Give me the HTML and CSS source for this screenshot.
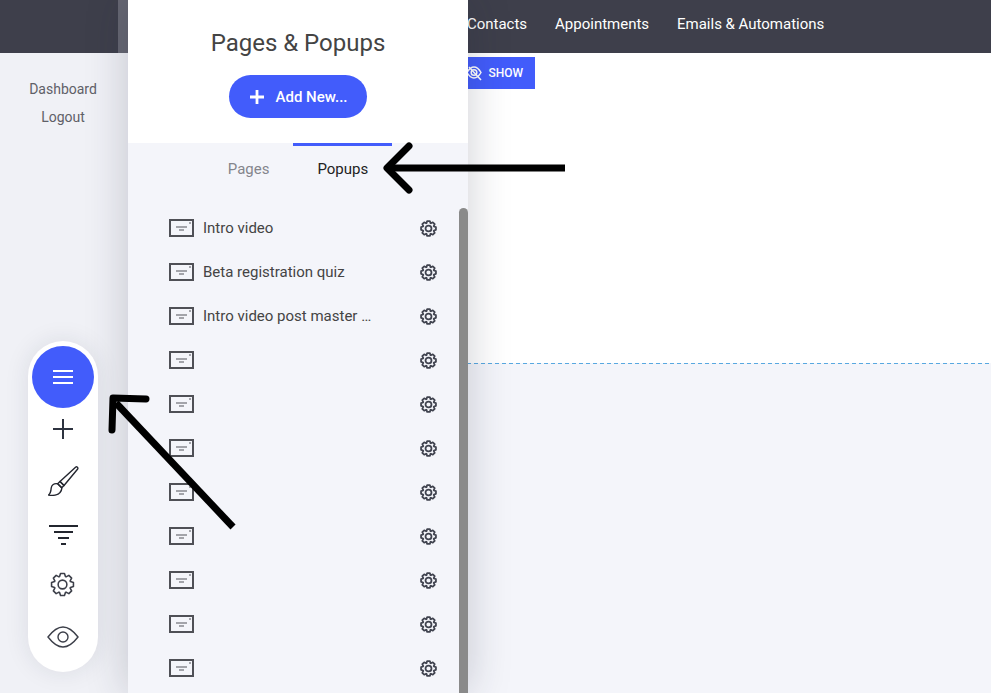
FILE: index.html
```html
<!DOCTYPE html>
<html lang="en">
<head>
<meta charset="utf-8">
<title>Pages &amp; Popups</title>
<link rel="stylesheet" href="styles.css">
</head>
<body>
<svg class="defs" width="0" height="0" aria-hidden="true">
  <symbol id="gear" viewBox="0 0 24 24">
    <polygon points="9.2,4.4 10.1,1.5 13.9,1.5 14.8,4.4 15.39,4.65 18.08,3.23 20.77,5.92 19.35,8.61 19.6,9.2 22.5,10.1 22.5,13.9 19.6,14.8 19.35,15.39 20.77,18.08 18.08,20.77 15.39,19.35 14.8,19.6 13.9,22.5 10.1,22.5 9.2,19.6 8.61,19.35 5.92,20.77 3.23,18.08 4.65,15.39 4.4,14.8 1.5,13.9 1.5,10.1 4.4,9.2 4.65,8.61 3.23,5.92 5.92,3.23 8.61,4.65"/>
    <circle cx="12" cy="12" r="4.2"/>
  </symbol>
  <symbol id="popup" viewBox="0 0 25 18">
    <rect x="1" y="1" width="23" height="16" fill="#f4f5fa" stroke="#4f5056" stroke-width="2"/>
    <rect x="7" y="7" width="11" height="2" fill="#a3a4aa"/>
    <rect x="10" y="10" width="5" height="2" fill="#a3a4aa"/>
    <rect x="20" y="3" width="2" height="2" fill="#a3a4aa"/>
  </symbol>
</svg>

<div class="app">
  <header class="topbar">
    <div class="topbar-tab"></div>
    <nav class="topnav">
      <a>Contacts</a>
      <a>Appointments</a>
      <a>Emails &amp; Automations</a>
    </nav>
  </header>
  <main class="main">
    <aside class="sidelinks">
      <a>Dashboard</a>
      <a>Logout</a>
    </aside>
    <section class="stage">
      <div class="canvas">
        <button class="show-btn">
          <svg class="show-icon" viewBox="0 0 16 16" fill="none" stroke="#fff" stroke-width="1.5">
            <path d="M1 7.5C3 4 5.2 2 8 2s5 2 7 5.5c-2 3.5-4.2 5.5-7 5.5s-5-2-7-5.5z"/>
            <circle cx="8" cy="7.5" r="2.8"/>
            <path d="M3 2l12 13"/>
          </svg>
          <span>SHOW</span>
        </button>
      </div>
      <div class="stage-line"></div>
    </section>
  </main>

  <aside class="panel">
    <div class="panel-head">
      <h1 class="panel-title">Pages &amp; Popups</h1>
      <button class="add-btn">
        <svg class="add-icon" viewBox="0 0 14 14"><path d="M7 0v14M0 7h14" stroke="#fff" stroke-width="2.8" fill="none"/></svg>
        <span>Add New...</span>
      </button>
    </div>
    <div class="tabs">
      <div class="tab">Pages</div>
      <div class="tab tab-active">Popups</div>
    </div>
    <ul class="list">
      <li class="row"><svg class="row-icon"><use href="#popup"/></svg><span class="row-name">Intro video</span><svg class="row-gear"><use href="#gear"/></svg></li>
      <li class="row"><svg class="row-icon"><use href="#popup"/></svg><span class="row-name">Beta registration quiz</span><svg class="row-gear"><use href="#gear"/></svg></li>
      <li class="row"><svg class="row-icon"><use href="#popup"/></svg><span class="row-name">Intro video post master …</span><svg class="row-gear"><use href="#gear"/></svg></li>
      <li class="row"><svg class="row-icon"><use href="#popup"/></svg><span class="row-name"></span><svg class="row-gear"><use href="#gear"/></svg></li>
      <li class="row"><svg class="row-icon"><use href="#popup"/></svg><span class="row-name"></span><svg class="row-gear"><use href="#gear"/></svg></li>
      <li class="row"><svg class="row-icon"><use href="#popup"/></svg><span class="row-name"></span><svg class="row-gear"><use href="#gear"/></svg></li>
      <li class="row"><svg class="row-icon"><use href="#popup"/></svg><span class="row-name"></span><svg class="row-gear"><use href="#gear"/></svg></li>
      <li class="row"><svg class="row-icon"><use href="#popup"/></svg><span class="row-name"></span><svg class="row-gear"><use href="#gear"/></svg></li>
      <li class="row"><svg class="row-icon"><use href="#popup"/></svg><span class="row-name"></span><svg class="row-gear"><use href="#gear"/></svg></li>
      <li class="row"><svg class="row-icon"><use href="#popup"/></svg><span class="row-name"></span><svg class="row-gear"><use href="#gear"/></svg></li>
      <li class="row"><svg class="row-icon"><use href="#popup"/></svg><span class="row-name"></span><svg class="row-gear"><use href="#gear"/></svg></li>
    </ul>
    <div class="scrollbar"></div>
  </aside>

  <div class="toolbar">
    <button class="tool-main">
      <svg class="tool-burger" viewBox="0 0 20 14"><path d="M0 1h20M0 7h20M0 13h20" stroke="#fff" stroke-width="2" fill="none"/></svg>
    </button>
    <svg class="tool-plus" viewBox="0 0 20 20"><path d="M10 0v20M0 10h20" stroke="#2e3340" stroke-width="2" fill="none"/></svg>
    <svg class="tool-brush" viewBox="0 0 31 31" fill="none" stroke="#23262f" stroke-width="1.4" stroke-linejoin="round">
      <path d="M27.8 1c1-.7 2.6.7 1.9 2L16 19.5l-4-4z"/>
      <path d="M12 15.5l4 4-2.3 2.3-4-4z"/>
      <path d="M9.7 17.8C6 17 3.5 19 3.2 22c-.2 3-.7 5.5-2.7 7 4.500 1 9.500 0 11.500-2.500 1.500-2 2-3.500 1.700-4.700z"/>
    </svg>
    <svg class="tool-filter" viewBox="0 0 29 21"><path d="M0 1h29M5 7h19M9 13h11M12 19h5" stroke="#23262f" stroke-width="2" fill="none"/></svg>
    <svg class="tool-gear"><use href="#gear"/></svg>
    <svg class="tool-eye" viewBox="0 0 32 22" fill="none" stroke="#3c3f49" stroke-width="1.4">
      <path d="M1 11C6 4.5 10.5 1 16 1s10 3.500 15 10c-5 6.500-9.500 10-15 10S6 17.500 1 11z"/>
      <circle cx="16" cy="11" r="5"/>
    </svg>
  </div>

  <svg class="arrows" viewBox="0 0 991 693" fill="none" stroke="#000" aria-hidden="true">
    <path d="M565 168H389" stroke-width="7"/>
    <path d="M409 146l-22 22 22 22" stroke-width="7" stroke-linecap="round" stroke-linejoin="round"/>
    <path d="M233 527L116 403" stroke-width="7"/>
    <path d="M146 399l-33-1-1 32" stroke-width="7" stroke-linecap="round" stroke-linejoin="round"/>
  </svg>
</div>
</body>
</html>
```
FILE: styles.css
```css
* { box-sizing: border-box; }
html, body { margin: 0; padding: 0; height: 100%; overflow: hidden; }
body { font-family: Roboto, "Liberation Sans", sans-serif; background: #f4f5fa; color: #333; }
.defs { position: absolute; }
.app { position: relative; width: 991px; height: 693px; overflow: hidden; display: flex; flex-direction: column; }

.topbar { height: 53px; flex: none; background: #3e3f4b; display: flex; padding-left: 118px; }
.topbar-tab { width: 10px; background: #666772; }
.topnav { margin-left: 339px; display: flex; gap: 28px; align-items: center; padding-bottom: 5px; }
.topnav a { color: #fff; font-size: 15px; letter-spacing: -.01px; }

.main { flex: 1; display: flex; }
.sidelinks { width: 128px; flex: none; display: flex; flex-direction: column; align-items: center; gap: 9px; padding: 27px 2px 0 0; font-size: 14px; color: #5f6068; background: #f0f1f6; }
.sidelinks a { line-height: 19px; }
.stage { flex: 1; }
.canvas { height: 310px; background: #fff; padding: 4px 0 0 298px; }
.stage-line { height: 1px; background: repeating-linear-gradient(90deg, #58a8e0 0 4px, transparent 4px 7px); background-position-x: 3px; }
.show-btn { width: 109px; height: 32px; margin: 0; border: 0; background: #425cfb; color: #fff; font: 500 12px Roboto, sans-serif; display: flex; align-items: center; justify-content: flex-end; padding: 0 12px 0 0; gap: 6px; }
.show-icon { width: 16px; height: 16px; }

.panel { position: absolute; left: 128px; top: 0; width: 340px; height: 693px; background: #f4f5fa; box-shadow: 0 0 40px rgba(30, 35, 60, .22); overflow: hidden; }
.panel-head { height: 143px; background: #fff; display: flex; flex-direction: column; align-items: center; padding-top: 29px; }
.panel-title { margin: 0; font-size: 24px; font-weight: 400; line-height: 28px; color: #444; }
.add-btn { margin-top: 18px; width: 138px; height: 43px; border: 0; border-radius: 22px; background: #425cfb; color: #fff; font: 500 15px Roboto, sans-serif; display: flex; align-items: center; justify-content: center; gap: 12px; padding: 0 0 0 1px; }
.add-icon { width: 14px; height: 14px; }

.tabs { height: 50px; display: flex; justify-content: center; }
.tab { padding: 0 24px; border-top: 3px solid transparent; font-size: 15px; line-height: 47px; color: #84858c; }
.tab-active { border-top-color: #425cfb; color: #222; }

.list { list-style: none; margin: 0; padding: 13px 0 0 41px; }
.row { height: 44px; display: flex; align-items: center; }
.row-icon { width: 25px; height: 18px; flex: none; }
.row-name { width: 168px; margin-left: 9px; font-size: 15px; color: #444; white-space: nowrap; }
.row-gear { width: 17px; height: 17px; margin-left: 49px; margin-top: 1px; fill: none; stroke: #40434f; stroke-width: 2.5; stroke-linejoin: round; }
.scrollbar { position: absolute; left: 331px; top: 208px; width: 9px; height: 490px; border-radius: 5px 5px 0 0; background: #8a8a8a; }

.toolbar { position: absolute; left: 28px; top: 341px; width: 70px; height: 331px; border-radius: 35px; background: #fff; box-shadow: 0 0 24px rgba(30, 35, 60, .10); display: flex; flex-direction: column; align-items: center; padding-top: 5px; }
.tool-main { width: 62px; height: 62px; border: 0; padding: 0; border-radius: 50%; background: #425cfb; display: flex; align-items: center; justify-content: center; flex: none; }
.tool-burger { width: 20px; height: 14px; }
.tool-plus { width: 20px; height: 20px; margin-top: 11px; }
.tool-brush { width: 31px; height: 31px; margin: 27px 0 0 1px; }
.tool-filter { width: 29px; height: 21px; margin-top: 28px; flex: none; }
.tool-gear { width: 25px; height: 25px; margin: 26px 1px 0 0; fill: none; stroke: #3c3f49; stroke-width: 1.5; stroke-linejoin: round; }
.tool-eye { width: 32px; height: 22px; margin: 29px 1px 0 0; }

.arrows { position: absolute; left: 0; top: 0; width: 991px; height: 693px; pointer-events: none; }
```
